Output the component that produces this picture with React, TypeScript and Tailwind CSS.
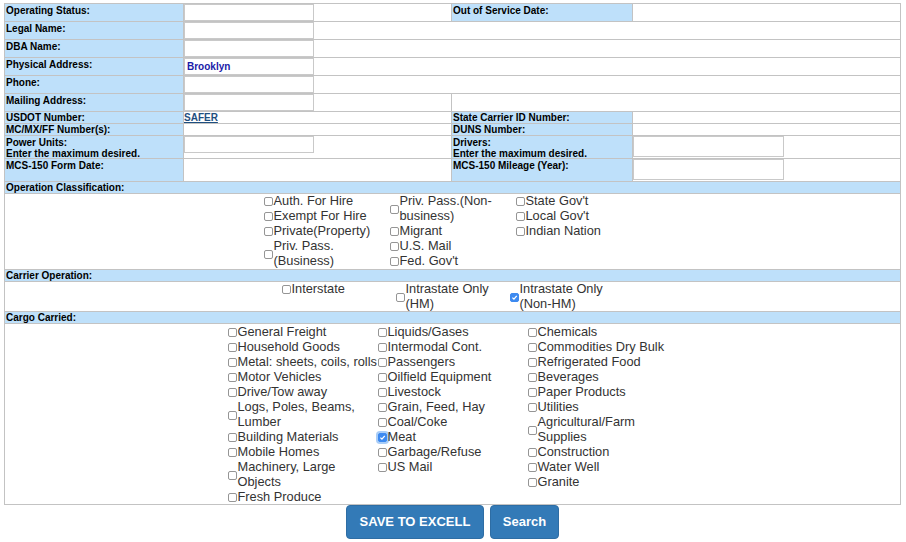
import React from 'react'

type Opt = { label: string; checked?: boolean; focus?: boolean; nowrap?: boolean }

const opClass: Opt[][] = [
  [{ label: 'Auth. For Hire' }, { label: 'Exempt For Hire' }, { label: 'Private(Property)' }, { label: 'Priv. Pass. (Business)' }],
  [{ label: 'Priv. Pass.(Non-business)' }, { label: 'Migrant' }, { label: 'U.S. Mail' }, { label: "Fed. Gov't" }],
  [{ label: "State Gov't" }, { label: "Local Gov't" }, { label: 'Indian Nation' }],
]

const carrierOp: Opt[][] = [
  [{ label: 'Interstate' }],
  [{ label: 'Intrastate Only (HM)' }],
  [{ label: 'Intrastate Only (Non-HM)', checked: true }],
]

const cargo: Opt[][] = [
  [
    { label: 'General Freight' },
    { label: 'Household Goods' },
    { label: 'Metal: sheets, coils, rolls', nowrap: true },
    { label: 'Motor Vehicles' },
    { label: 'Drive/Tow away' },
    { label: 'Logs, Poles, Beams, Lumber' },
    { label: 'Building Materials' },
    { label: 'Mobile Homes' },
    { label: 'Machinery, Large Objects' },
    { label: 'Fresh Produce' },
  ],
  [
    { label: 'Liquids/Gases' },
    { label: 'Intermodal Cont.' },
    { label: 'Passengers' },
    { label: 'Oilfield Equipment' },
    { label: 'Livestock' },
    { label: 'Grain, Feed, Hay' },
    { label: 'Coal/Coke' },
    { label: 'Meat', checked: true, focus: true },
    { label: 'Garbage/Refuse' },
    { label: 'US Mail' },
  ],
  [
    { label: 'Chemicals' },
    { label: 'Commodities Dry Bulk' },
    { label: 'Refrigerated Food' },
    { label: 'Beverages' },
    { label: 'Paper Products' },
    { label: 'Utilities' },
    { label: 'Agricultural/Farm Supplies' },
    { label: 'Construction' },
    { label: 'Water Well' },
    { label: 'Granite' },
  ],
]

function Box({ checked, focus }: { checked?: boolean; focus?: boolean }) {
  return (
    <span
      className={`mt-[2px] flex h-[9px] w-[9px] shrink-0 items-center justify-center rounded-[2px] border ${
        checked ? 'border-[#3d8af0] bg-[#3d8af0]' : 'border-[#959595] bg-white'
      } ${focus ? 'shadow-[0_0_0_2px_#a9cdf7]' : ''}`}
    >
      {checked && (
        <svg width="7" height="7" viewBox="0 0 10 10">
          <path d="M2 5.2 L4.2 7.4 L8.2 2.6" fill="none" stroke="white" strokeWidth="1.8" />
        </svg>
      )}
    </span>
  )
}

function CheckList({ cols, width, raise }: { cols: Opt[][]; width: string; raise?: boolean }) {
  return (
    <div className={`grid justify-center text-[12.8px] leading-[15px] text-[#333] ${raise ? '-mt-px' : ''} ${width}`}>
      {cols.map((col, i) => (
        <div key={i} className="flex flex-col">
          {col.map((o) => (
            <div key={o.label} className="flex items-center">
              <Box checked={o.checked} focus={o.focus} />
              <span className={`ml-px ${o.nowrap ? 'whitespace-nowrap' : ''}`}>{o.label}</span>
            </div>
          ))}
        </div>
      ))}
    </div>
  )
}

function Label({ text, tight, span }: { text: string; tight?: boolean; span?: string }) {
  return (
    <div className={`bg-[#bee0fa] px-px text-[10px] font-bold text-black ${tight ? 'leading-[11px]' : 'pt-px leading-[12px]'} ${span ?? ''}`}>
      {text}
    </div>
  )
}

function Label2({ a, b }: { a: string; b: string }) {
  return (
    <div className="bg-[#bee0fa] px-px pt-px text-[10px] leading-[11px] font-bold text-black">
      <div>{a}</div>
      <div>{b}</div>
    </div>
  )
}

function Field({ w = 'w-[130px]', h = 'h-[17px]', value }: { w?: string; h?: string; value?: string }) {
  return (
    <div className={`flex items-center border border-[#c9c9c9] bg-white px-[2px] text-[10px] font-bold text-[#1a1aa8] ${w} ${h}`}>
      {value}
    </div>
  )
}

const white = 'bg-white'

export default function App() {
  return (
    <div className="min-h-[542px] bg-white pt-[3px] pl-[4px] font-['Liberation_Sans',Arial,sans-serif]">
      <div className="w-[897px]">
        <div className="grid grid-cols-[178px_267px_180px_267px] grid-rows-[17px_17px_17px_17px_17px_17px_11px_11px_22px_22px_11px_75px_11px_29px_11px_180px] gap-px bg-[#c3c3c3] p-px">
          <Label text="Operating Status:" />
          <div className={white}><Field /></div>
          <Label text="Out of Service Date:" />
          <div className={white} />

          <Label text="Legal Name:" />
          <div className={`${white} col-span-3`}><Field /></div>

          <Label text="DBA Name:" />
          <div className={`${white} col-span-3`}><Field /></div>

          <Label text="Physical Address:" />
          <div className={`${white} col-span-3`}><Field value="Brooklyn" /></div>

          <Label text="Phone:" />
          <div className={`${white} col-span-3`}><Field /></div>

          <Label text="Mailing Address:" />
          <div className={white}><Field /></div>
          <div className={`${white} col-span-2`} />

          <Label text="USDOT Number:" tight />
          <div className={`${white} text-[10px] leading-[11px] font-bold`}>
            <a className="text-[#1f4f80] underline" href="#">SAFER</a>
          </div>
          <Label text="State Carrier ID Number:" tight />
          <div className={white} />

          <Label text="MC/MX/FF Number(s):" tight />
          <div className={white} />
          <Label text="DUNS Number:" tight />
          <div className={white} />

          <Label2 a="Power Units:" b="Enter the maximum desired." />
          <div className={white}><Field /></div>
          <Label2 a="Drivers:" b="Enter the maximum desired." />
          <div className={white}><Field w="w-[151px]" h="h-[21px]" /></div>

          <Label text="MCS-150 Form Date:" />
          <div className={white} />
          <Label text="MCS-150 Mileage (Year):" />
          <div className={white}><Field w="w-[151px]" h="h-[21px]" /></div>

          <Label text="Operation Classification:" tight span="col-span-4" />
          <div className={`${white} col-span-4`}>
            <CheckList cols={opClass} width="grid-cols-[126px_126px_126px]" raise />
          </div>

          <Label text="Carrier Operation:" tight span="col-span-4" />
          <div className={`${white} col-span-4`}>
            <CheckList cols={carrierOp} width="grid-cols-[114px_114px_114px]" raise />
          </div>

          <Label text="Cargo Carried:" tight span="col-span-4" />
          <div className={`${white} col-span-4`}>
            <CheckList cols={cargo} width="grid-cols-[150px_150px_150px]" />
          </div>
        </div>

        <div className="flex justify-center gap-[6px]">
          <button className="h-[34px] w-[138px] rounded-[4px] border border-[#2e6da4] bg-[#337ab7] text-[13px] font-bold text-white">
            SAVE TO EXCELL
          </button>
          <button className="h-[34px] w-[69px] rounded-[4px] border border-[#2e6da4] bg-[#337ab7] text-[13px] font-bold text-white">
            Search
          </button>
        </div>
      </div>
    </div>
  )
}
